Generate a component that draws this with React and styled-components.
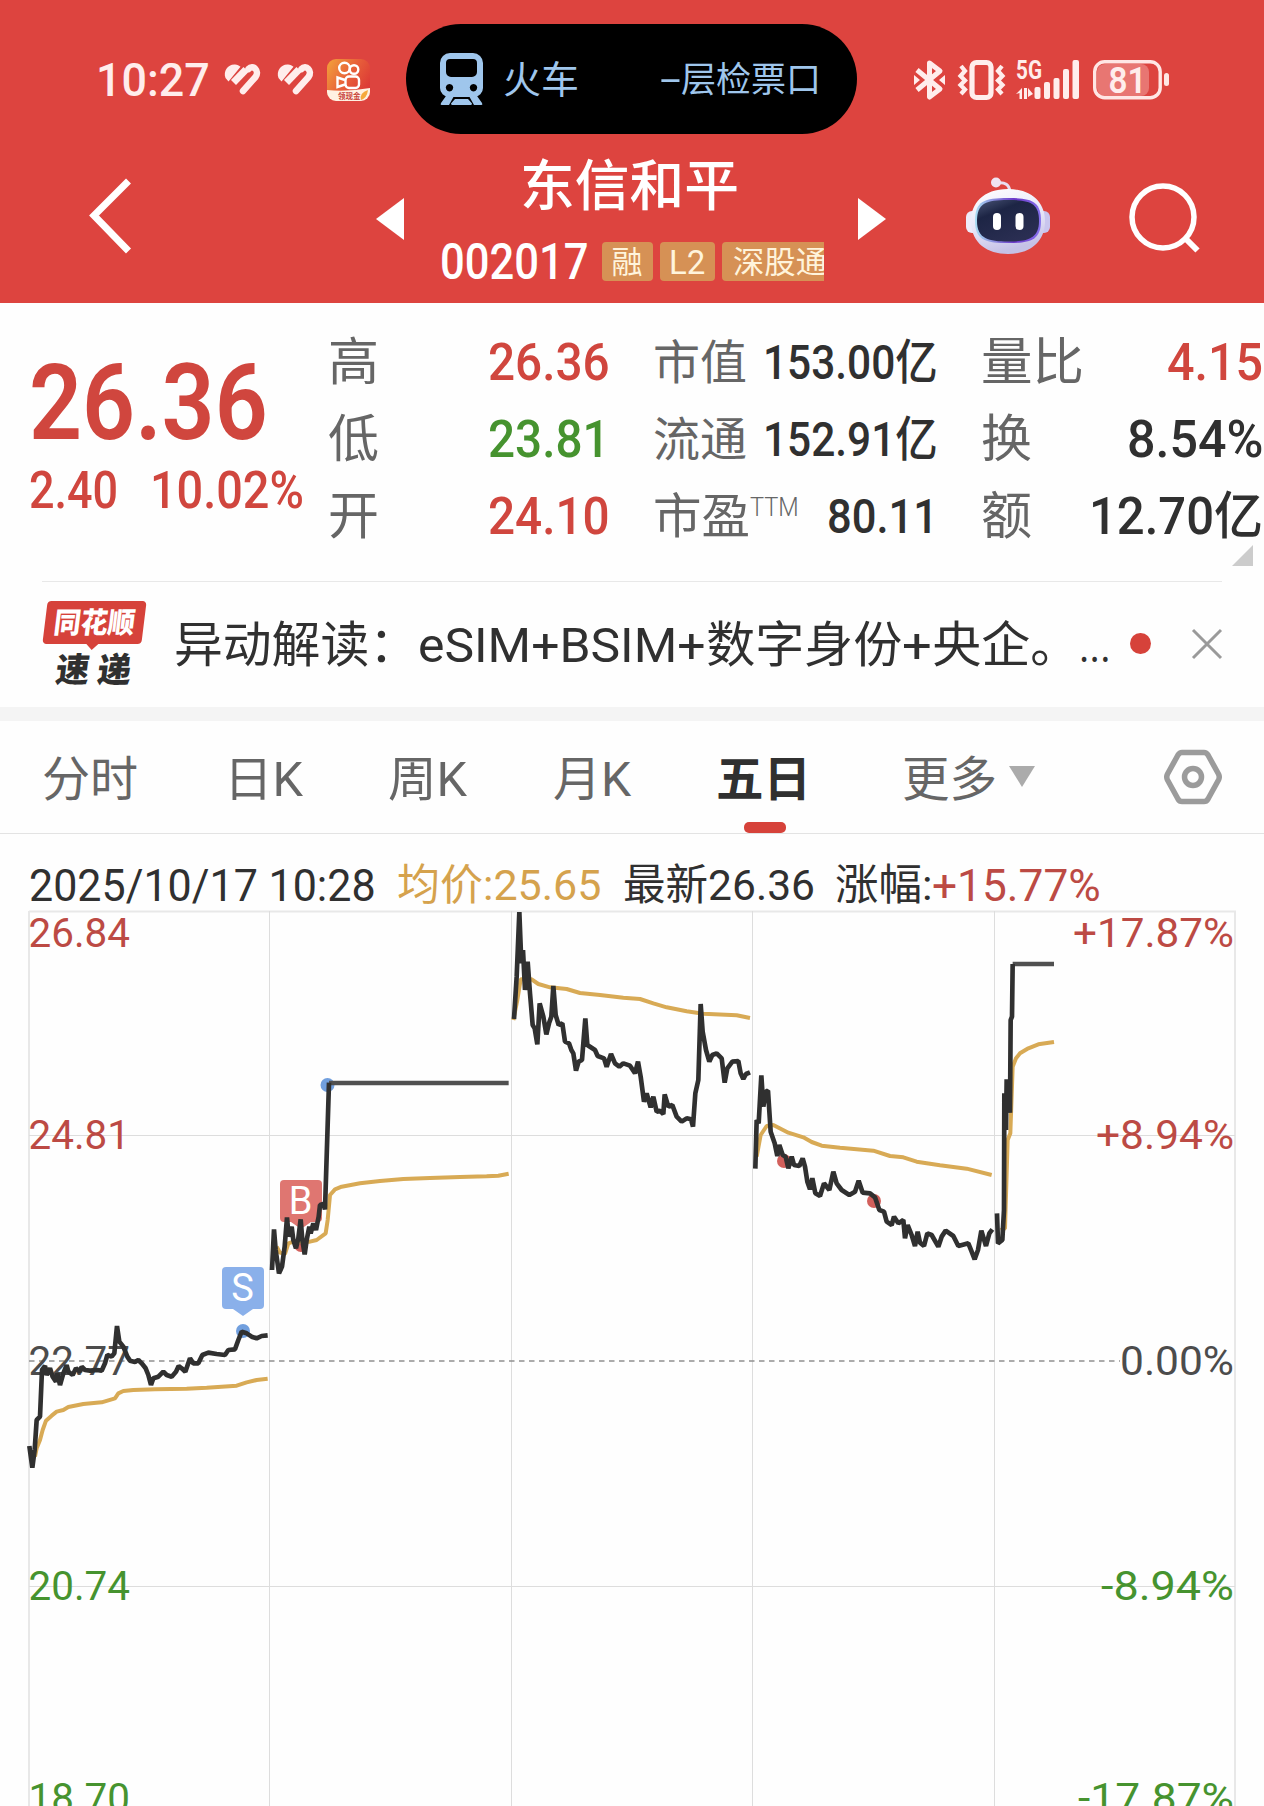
import React, { useLayoutEffect, useRef, useState } from 'react';
import styled, { createGlobalStyle } from 'styled-components';

const RED = '#D0463E';
const GREEN = '#46932F';
const DARK = '#303030';
const GREY = '#666666';

const GlobalStyle = createGlobalStyle`
  * { box-sizing: border-box; }
  body {
    margin: 0;
    background: #fff;
    font-family: Roboto, 'Noto Sans CJK SC', sans-serif;
  }
  svg { display: block; flex: none; overflow: visible; }
`;

const Screen = styled.div`
  width: 1264px;
  height: 1806px;
  overflow: hidden;
  background: #fefefe;
`;

/* text that is squeezed to a given width, the UI face is narrower than Roboto */
const FitBox = styled.span`
  display: block;
  flex: none;
  width: ${p => p.$w}px;
  margin-left: ${p => p.$ml || 0}px;
  margin-right: ${p => p.$mr || 0}px;
  font-size: ${p => p.$size}px;
  line-height: ${p => p.$size}px;
  font-weight: ${p => p.$weight || 400};
  color: ${p => p.$color || 'inherit'};
  white-space: nowrap;
`;
const FitInner = styled.span`
  display: inline-block;
  vertical-align: top;
  transform-origin: 0 50%;
`;

function Fit({ w, size, weight, color, ml, mr, children }) {
  const ref = useRef(null);
  const [scale, setScale] = useState(1);
  useLayoutEffect(() => {
    setScale(w / ref.current.offsetWidth);
  }, [w, children]);
  return (
    <FitBox $w={w} $size={size} $weight={weight} $color={color} $ml={ml} $mr={mr}>
      <FitInner ref={ref} style={{ transform: `translateY(1px) scaleX(${scale})` }}>{children}</FitInner>
    </FitBox>
  );
}

const Header = styled.header`
  height: 303px;
  background: #DD443F;
  color: #fff;
`;

const StatusBar = styled.div`
  display: grid;
  grid-template-columns: 406px 451px 1fr;
  align-items: center;
  height: 150px;
  padding-top: 8px;
  color: #FFEDEC;
`;
const StatusLeft = styled.div`
  display: flex;
  align-items: center;
  padding-left: 96px;
`;
const StatusRight = styled.div`
  display: flex;
  align-items: center;
  padding: 1px 0 0 57px;
`;
const Island = styled.div`
  display: flex;
  align-items: center;
  height: 110px;
  padding-left: 34px;
  border-radius: 55px;
  background: #000;
  color: #9FC6EC;
`;

const NavBar = styled.div`
  display: flex;
  align-items: flex-start;
  height: 153px;
  padding-left: 88px;
`;
const NavItem = styled.div`
  flex: none;
  margin-top: ${p => p.$top}px;
  margin-left: ${p => p.$left}px;
`;
const TitleBlock = styled.div`
  display: flex;
  flex-direction: column;
  align-items: center;
  width: 454px;
  padding-top: 8px;
`;
const CodeRow = styled.div`
  display: flex;
  align-items: center;
  gap: 7px;
  width: 385px;
  height: 60px;
  margin-top: 18px;
  overflow: hidden;
`;
const Tag = styled.span`
  flex: none;
  display: flex;
  align-items: center;
  justify-content: center;
  width: ${p => p.$w}px;
  height: 39px;
  border-radius: 4px;
  background: #D69155;
  color: #FFF4DC;
`;

const Quote = styled.section`
  display: flex;
  height: 278px;
`;
const PriceBlock = styled.div`
  width: 329px;
  padding: 47px 0 0 29px;
`;
const ChangeRow = styled.div`
  display: flex;
  margin-top: 9px;
`;
const StatColumn = styled.div`
  width: ${p => p.$w}px;
  margin-right: ${p => p.$gap}px;
  padding-top: 20px;
`;
const StatRow = styled.div`
  display: flex;
  align-items: center;
  height: 77px;
  color: ${GREY};
`;
const Spacer = styled.div`
  flex: 1;
`;
const Sup = styled.div`
  height: 46px;
`;
const ExpandCorner = styled.div`
  width: 21px;
  height: 21px;
  margin: -9px 0 0 251px;
  background: #ccc;
  clip-path: polygon(100% 0, 100% 100%, 0 100%);
`;

const News = styled.section`
  display: flex;
  align-items: center;
  height: 126px;
  margin: 0 42px;
  padding-bottom: 2px;
  border-top: 1px solid #E8E8E8;
`;
const NewsLogo = styled.div`
  width: 105px;
  height: 85px;
  margin-right: 29px;
`;
const LogoTop = styled.div`
  position: relative;
  display: flex;
  justify-content: center;
  align-items: center;
  width: 99px;
  height: 43px;
  margin-left: 3px;
  border-radius: 4px;
  background: #D6423A;
  color: #fff;
  transform: skewX(-7deg);
  &::after {
    content: '';
    position: absolute;
    left: 43px;
    top: 42px;
    border: 7px solid transparent;
    border-top-color: #D6423A;
    border-bottom: 0;
  }
`;
const LogoBottom = styled.div`
  margin: 8px 0 0 14px;
  transform: skewX(-7deg);
`;
const Headline = styled.div`
  display: flex;
  width: 936px;
  padding-top: 1px;
  color: ${DARK};
`;
const NewsDot = styled.span`
  width: 21px;
  height: 21px;
  margin-left: 20px;
  border-radius: 50%;
  background: #D6423A;
`;

const Band = styled.div`
  height: 14px;
  background: #F4F4F4;
`;

const Tabs = styled.nav`
  display: flex;
  height: 113px;
  border-bottom: 1px solid #E3E3E3;
`;
const Tab = styled.div`
  display: flex;
  flex-direction: column;
  align-items: center;
  margin-left: ${p => p.$left}px;
  padding-top: 34px;
  color: ${p => (p.$active ? DARK : GREY)};
`;
const TabMark = styled.div`
  width: 42px;
  height: 11px;
  margin: 19px 0 0 2px;
  border-radius: 5px;
  background: #D6423A;
`;
const Caret = styled.div`
  width: 26px;
  height: 21px;
  margin: 45px 0 0 12px;
  background: #ABABAB;
  clip-path: polygon(0 0, 100% 0, 50% 100%);
`;
const Settings = styled.div`
  margin: 28px 0 0 129px;
`;

const InfoRow = styled.div`
  display: flex;
  align-items: center;
  height: 71px;
  padding: 30px 0 0 29px;
  color: ${DARK};
`;

const sessions = [
  {
    x: 0, y: 1150,
    price: '88,888 97,953 104,900 110,810 120,800 126,660 135,648 140,675 150,655 158,680 168,695 172,670 180,705 190,670 200,645 205,665 218,675 228,655 240,665 245,650 255,660 270,662 290,660 305,662 315,640 322,615 335,620 343,610 351,528 358,575 370,590 382,620 390,632 405,636 415,630 425,640 437,655 445,675 453,705 460,685 475,680 490,665 500,675 515,680 528,665 536,648 545,655 556,665 570,625 580,640 595,640 607,615 625,608 650,612 675,615 685,600 705,598 715,570 725,545 740,550 755,560 770,565 785,558 803,556',
    avg: '105,920 110,895 120,870 128,840 138,812 155,797 170,785 190,780 205,771 250,762 305,757 345,745 355,730 370,723 400,720 465,718 560,716 620,713 710,707 740,697 770,690 803,686',
  },
  {
    x: 260, y: 1060,
    price: '36,630 42,508 47,570 57,640 66,620 74,560 81,472 86,530 95,500 100,540 108,565 115,535 122,478 127,540 134,583 140,540 148,500 152,520 160,490 168,510 176,470 180,435 190,432 195,448 207,68',
    flat: '207,69 746,69',
    avg: '50,560 60,578 75,582 85,550 100,545 150,545 170,540 197,520 203,480 210,405 225,388 245,380 300,370 360,363 430,357 510,354 600,351 680,349 715,347 746,341',
  },
  {
    x: 500, y: 900,
    price: '42,357 50,230 58,36 64,190 69,150 75,270 83,185 90,280 98,375 104,385 112,433 119,310 130,350 139,403 147,370 154,350 160,258 167,345 176,375 187,370 195,425 207,430 214,450 220,460 228,512 236,485 246,480 256,355 262,435 285,450 293,468 312,475 320,500 333,462 345,490 358,500 370,490 390,497 405,520 414,485 422,530 432,605 440,580 452,622 460,590 470,635 480,632 490,642 494,583 505,620 517,615 530,650 545,665 560,655 573,658 579,680 586,580 595,540 602,312 608,395 618,450 628,485 637,465 650,460 665,475 674,548 682,505 697,485 715,483 722,520 730,537 738,522 750,517',
    avg: '40,360 52,300 62,238 95,238 115,252 150,262 200,267 240,279 300,285 370,293 420,297 460,310 500,322 560,334 610,341 710,346 750,354',
  },
  {
    x: 740, y: 1060,
    price: '46,326 50,180 56,190 64,46 70,140 78,95 84,92 92,215 104,250 112,288 118,255 128,285 137,290 145,325 155,290 162,315 178,318 188,295 195,320 202,365 210,388 217,355 226,400 240,408 252,370 268,390 280,335 290,370 305,390 328,405 345,395 356,362 368,398 390,400 405,412 418,450 432,455 440,485 455,495 462,470 475,490 490,480 495,535 503,495 515,525 525,558 533,515 540,548 552,558 562,520 575,525 595,560 605,530 617,512 640,528 655,558 685,550 695,575 704,598 714,570 724,512 738,558 748,520 757,508',
    avg: '50,290 62,225 80,198 100,195 145,218 190,232 215,246 245,257 300,263 400,272 450,288 490,292 530,305 600,316 680,326 755,345',
  },
  {
    x: 970, y: 900,
    price: '81,940 84,1030 97,1020 102,930 103,580 108,690 110,538 120,638 122,360 126,350 128,192',
    flat: '128,192 252,192',
    avg: '92,990 105,985 113,720 121,700 128,500 138,475 150,460 175,445 205,433 252,426',
  },
];

const axis = [
  { y: 947, price: '26.84', pct: '+17.87%', w: 161, color: '#BC4A44' },
  { y: 1149, price: '24.81', pct: '+8.94%', w: 138, color: '#BC4A44' },
  { y: 1374.500, price: '22.77', pct: '0.00%', w: 114, color: '#4c4c4c' },
  { y: 1600, price: '20.74', pct: '-8.94%', w: 133, color: '#46932F' },
  { y: 1812, price: '18.70', pct: '-17.87%', w: 156, color: '#46932F' },
];

function Heart() {
  return (
    <svg width="37" height="32" viewBox="0 0 37 32" fill="none" stroke="#FFEDEC" strokeLinecap="round" strokeLinejoin="round">
      <path d="M1.5 15C-1 8 4 1 11 1.5c2.500 0 4 1 5.500 2.300L4.500 18.500Z" fill="#FFEDEC" stroke="none" />
      <path d="M9.500 19.500 22 6.500" strokeWidth="7" strokeLinecap="butt" />
      <path d="M19 28 31.500 14C36 8 29 1 24.500 6" strokeWidth="6.500" />
    </svg>
  );
}

function AppIcon() {
  return (
    <svg width="43" height="42" viewBox="0 0 43 42">
      <defs>
        <linearGradient id="app" x1="0" y1="0" x2="1" y2="0.6">
          <stop offset="0" stopColor="#F3A43A" />
          <stop offset="0.55" stopColor="#E8603A" />
          <stop offset="1" stopColor="#DC3A36" />
        </linearGradient>
        <clipPath id="appClip"><rect width="43" height="42" rx="9" /></clipPath>
      </defs>
      <g clipPath="url(#appClip)">
        <rect width="43" height="42" fill="url(#app)" />
        <g fill="none" stroke="#fff" strokeWidth="2.400">
          <circle cx="17.500" cy="9" r="5.300" />
          <circle cx="27" cy="10.500" r="4.300" />
          <rect x="18.500" y="17.500" width="13.500" height="11.500" rx="3.500" />
          <path d="M18 21 10.500 18.500v9.500L18 25.500" />
        </g>
        <path d="M0 31q20 2 43-2v13H0Z" fill="#FFF1E2" />
        <path d="M34 41q-2-7 7-10-1 8-7 10Z" fill="#F5A93D" />
        <text x="11" y="40" fontSize="7.500" fontWeight="700" fill="#C8433A">领现金</text>
      </g>
    </svg>
  );
}

function Train() {
  return (
    <svg width="43" height="53" viewBox="0 0 43 53" fill="#9FC6EC">
      <path fillRule="evenodd" d="M10 0h23a10 10 0 0 1 10 10v25a9 9 0 0 1-9 9H9a9 9 0 0 1-9-9V10A10 10 0 0 1 10 0Zm0 6a4 4 0 0 0-4 4v9a5 5 0 0 0 5 5h21a5 5 0 0 0 5-5v-9a4 4 0 0 0-4-4ZM9.500 31a3.700 3.700 0 1 0 .01 0Zm24 0a3.700 3.700 0 1 0 .01 0Z" />
      <path d="M6 43h8L9 52H1.500Q0 52 1 50Zm31 0h-8l5 9h7.500q1.500 0 .5-2ZM15 46h13l4 4.500q0 1.500-1.500 1.500h-18q-1.500 0-1.500-1.500Z" />
    </svg>
  );
}

function Bluetooth() {
  return (
    <svg width="31" height="40" viewBox="0 0 31 40" fill="none" stroke="#FFEDEC" strokeWidth="5" strokeLinejoin="round">
      <path d="M3 10 26 29 15.500 37V3L26 11 3 30" />
      <path d="m0 15 6 5-6 5Zm31 0-6 5 6 5Z" fill="#FFEDEC" stroke="none" />
    </svg>
  );
}

function Vibrate() {
  return (
    <svg width="47" height="40" viewBox="0 0 47 40" fill="none" stroke="#FFEDEC" strokeWidth="4.200">
      <rect x="14" y="2.500" width="19" height="35" rx="4.500" strokeWidth="5.200" />
      <path d="M3 6 7 11 2.500 16 7 20.500 2.500 25 7 29.500 3 34M44 6l-4 5 4.500 5L40 20.500l4.500 4.500-4.500 4.500 4 4.500" />
    </svg>
  );
}

function Signal() {
  return (
    <svg width="64" height="40" viewBox="0 0 64 40" fill="#FFEDEC">
      <text x="0" y="19" fontSize="25" fontWeight="700" textLength="26" lengthAdjust="spacingAndGlyphs">5G</text>
      <path d="M0 34 6 28v11H3.500v-6Zm8-6h3v11H8Zm4 0 5 6-5 3Z" />
      <rect x="18.500" y="27" width="6" height="12" rx="2" />
      <rect x="28" y="22" width="6" height="17" rx="2" />
      <rect x="37.500" y="18" width="6" height="21" rx="2" />
      <rect x="47" y="9" width="6" height="30" rx="2" />
      <rect x="56.500" y="0" width="6.500" height="39" rx="2" />
    </svg>
  );
}

function Battery() {
  return (
    <svg width="77" height="40" viewBox="0 0 77 40">
      <rect x="4" y="4" width="52" height="32" rx="8" fill="#E87672" />
      <rect x="1.700" y="1.700" width="65.500" height="36" rx="10" fill="none" stroke="#FFE6E4" strokeWidth="3.400" />
      <rect x="71" y="13" width="5" height="13" rx="2.500" fill="#FFE6E4" />
      <text x="15.500" y="32.500" fontSize="37" fontWeight="600" fill="#FFEDEC" textLength="38" lengthAdjust="spacingAndGlyphs">81</text>
    </svg>
  );
}

function Robot() {
  return (
    <svg width="84" height="78" viewBox="0 0 84 78">
      <defs>
        <linearGradient id="shell" x1="0" y1="0" x2="0.300" y2="1">
          <stop offset="0" stopColor="#FFFFFF" />
          <stop offset="0.600" stopColor="#E6E5F8" />
          <stop offset="1" stopColor="#C5C1E6" />
        </linearGradient>
        <linearGradient id="rim" x1="0" y1="0.500" x2="1" y2="0.500">
          <stop offset="0" stopColor="#A9DDF3" />
          <stop offset="0.600" stopColor="#6A35C8" />
          <stop offset="1" stopColor="#8672EC" />
        </linearGradient>
        <linearGradient id="face" x1="0" y1="0" x2="0.600" y2="1">
          <stop offset="0" stopColor="#4A5577" />
          <stop offset="0.350" stopColor="#1D2545" />
          <stop offset="1" stopColor="#2A2E52" />
        </linearGradient>
      </defs>
      <path d="M31 6q12-2 13 9" fill="none" stroke="#E9DDF0" strokeWidth="3" />
      <circle cx="30" cy="5.500" r="5" fill="#F0E4F2" />
      <rect x="0" y="34" width="14" height="22" rx="6" fill="#EDEBFA" />
      <rect x="70" y="34" width="14" height="22" rx="6" fill="#C9C5EE" />
      <path d="M42 12c26 0 38 16 37 34-1 20-16 31-37 31S6 66 5 46C4 28 16 12 42 12Z" fill="url(#shell)" />
      <path d="M42 21c24 0 33 3 33 23S63 66 42 66 9 64 9 44s9-23 33-23Z" fill="url(#rim)" />
      <path d="M42 23c22 0 31 3 31 21S61 64.500 42 64.500 11 62 11 44s9-21 31-21Z" fill="url(#face)" />
      <rect x="27" y="36" width="8" height="17" rx="4" fill="#fff" />
      <rect x="49.500" y="36" width="8" height="17" rx="4" fill="#fff" />
    </svg>
  );
}

function Marker({ x, y, color, letter }) {
  return (
    <g>
      <rect x={x} y={y} width="42" height="42" rx="4" fill={color} />
      <path d={`M${x + 11} ${y + 42}h20l-10 7Z`} fill={color} />
      <text x={x + 20.500} y={y + 34} fontSize="38" fill="#fff" textAnchor="middle">{letter}</text>
    </g>
  );
}

function Chart() {
  return (
    <svg width="1264" height="901" viewBox="0 905 1264 901">
      <path d="M29 911.500H1236M29 911V1806M1235 911V1806" stroke="#E8E8E8" strokeWidth="2" fill="none" />
      <path d="M269.500 911V1806M511.500 911V1806M752.500 911V1806M994.500 911V1806M29 1135.500H1235M29 1586.500H1235" stroke="#DDDDDD" strokeWidth="1" fill="none" />
      <path d="M29 1361H1120" stroke="#909090" strokeWidth="1.600" strokeDasharray="5.500 4.500" />
      {axis.map(a => (
        <g key={a.price} fontSize="41" fill={a.color}>
          <text x="28.500" y={a.y} textLength="101.500" lengthAdjust="spacingAndGlyphs">{a.price}</text>
          <text x={1234 - a.w} y={a.y} textLength={a.w} lengthAdjust="spacingAndGlyphs">{a.pct}</text>
        </g>
      ))}
      <Marker x={222} y={1267} color="#8AB0EA" letter="S" />
      <Marker x={280} y={1180} color="#DF7671" letter="B" />
      <circle cx="243" cy="1331" r="7" fill="#719FDE" />
      <circle cx="327.500" cy="1085" r="7" fill="#719FDE" />
      <circle cx="301" cy="1245" r="7" fill="#D2605C" />
      <circle cx="784" cy="1161" r="7" fill="#D2605C" />
      <circle cx="874" cy="1201" r="7" fill="#D2605C" />
      {sessions.map(s => (
        <g key={s.x} transform={`translate(${s.x} ${s.y}) scale(0.33333)`} fill="none" strokeLinejoin="bevel">
          <polyline points={s.avg} stroke="#D8AA55" strokeWidth="12" />
          {s.flat && <polyline points={s.flat} stroke="#505050" strokeWidth="13" />}
          <polyline points={s.price} stroke={DARK} strokeWidth="14" />
        </g>
      ))}
    </svg>
  );
}

function App() {
  return (
    <Screen>
      <GlobalStyle />
      <Header>
        <StatusBar>
          <StatusLeft>
            <Fit w={114} size={46} weight={500} mr={14}>10:27</Fit>
            <Heart />
            <NavItem $top={0} $left={16}><Heart /></NavItem>
            <NavItem $top={2} $left={13}><AppIcon /></NavItem>
          </StatusLeft>
          <Island>
            <Train />
            <Fit w={76} size={38} ml={20}>火车</Fit>
            <Fit w={21} size={36} ml={81} weight={400}>-</Fit>
            <Fit w={140} size={35}>层检票口</Fit>
          </Island>
          <StatusRight>
            <Bluetooth />
            <NavItem $top={0} $left={13}><Vibrate /></NavItem>
            <NavItem $top={0} $left={11}><Signal /></NavItem>
            <NavItem $top={0} $left={13}><Battery /></NavItem>
          </StatusRight>
        </StatusBar>
        <NavBar>
          <NavItem $top={26} $left={0}>
            <svg width="46" height="80" viewBox="0 0 46 80" fill="none" stroke="#fff" strokeWidth="7">
              <path d="M40.500 5 6 39.500 40.500 75" />
            </svg>
          </NavItem>
          <NavItem $top={48} $left={242}>
            <svg width="28" height="42" viewBox="0 0 28 42" fill="#fff"><path d="M0 21 28 0V42Z" /></svg>
          </NavItem>
          <TitleBlock>
            <Fit w={219} size={55} weight={500} mr={3}>东信和平</Fit>
            <CodeRow>
              <Fit w={149} size={50} weight={500} ml={1} mr={6}>002017</Fit>
              <Tag $w={51}><Fit w={31} size={31}>融</Fit></Tag>
              <Tag $w={55}><Fit w={36} size={33}>L2</Fit></Tag>
              <Tag $w={116}><Fit w={94} size={31}>深股通</Fit></Tag>
            </CodeRow>
          </TitleBlock>
          <NavItem $top={48} $left={0}>
            <svg width="28" height="42" viewBox="0 0 28 42" fill="#fff"><path d="M28 21 0 0V42Z" /></svg>
          </NavItem>
          <NavItem $top={27} $left={80}><Robot /></NavItem>
          <NavItem $top={33} $left={79}>
            <svg width="72" height="72" viewBox="0 0 72 72" fill="none" stroke="#fff" strokeWidth="5.500">
              <circle cx="34" cy="34" r="31" />
              <path d="M55 54 68.500 67.500" strokeWidth="6" />
            </svg>
          </NavItem>
        </NavBar>
      </Header>

      <Quote>
        <PriceBlock>
          <Fit w={239} size={105} weight={600} color={RED}>26.36</Fit>
          <ChangeRow>
            <Fit w={89} size={52} weight={500} color={RED}>2.40</Fit>
            <Fit w={154} size={52} weight={500} color={RED} ml={32}>10.02%</Fit>
          </ChangeRow>
        </PriceBlock>
        <StatColumn $w={281} $gap={43}>
          <StatRow><Fit w={51} size={51} ml={-1}>高</Fit><Spacer /><Fit w={122} size={52} weight={500} color={RED}>26.36</Fit></StatRow>
          <StatRow><Fit w={51} size={51} ml={-1}>低</Fit><Spacer /><Fit w={122} size={52} weight={500} color={GREEN}>23.81</Fit></StatRow>
          <StatRow><Fit w={51} size={51} ml={-1}>开</Fit><Spacer /><Fit w={122} size={52} weight={500} color={RED}>24.10</Fit></StatRow>
        </StatColumn>
        <StatColumn $w={285} $gap={43}>
          <StatRow><Fit w={94} size={47}>市值</Fit><Spacer /><Fit w={175} size={48} weight={500} color={DARK}>153.00亿</Fit></StatRow>
          <StatRow><Fit w={94} size={47}>流通</Fit><Spacer /><Fit w={175} size={48} weight={500} color={DARK}>152.91亿</Fit></StatRow>
          <StatRow>
            <Fit w={97} size={48}>市盈</Fit>
            <Sup><Fit w={49} size={26} weight={300}>TTM</Fit></Sup>
            <Spacer />
            <Fit w={111} size={49} weight={500} color={DARK}>80.11</Fit>
          </StatRow>
        </StatColumn>
        <StatColumn $w={282} $gap={0}>
          <StatRow><Fit w={103} size={51}>量比</Fit><Spacer /><Fit w={96} size={52} weight={500} color={RED}>4.15</Fit></StatRow>
          <StatRow><Fit w={51} size={51}>换</Fit><Spacer /><Fit w={136} size={52} weight={500} color={DARK}>8.54%</Fit></StatRow>
          <StatRow><Fit w={51} size={51}>额</Fit><Spacer /><Fit w={174} size={51} weight={500} color={DARK}>12.70亿</Fit></StatRow>
          <ExpandCorner />
        </StatColumn>
      </Quote>

      <News>
        <NewsLogo>
          <LogoTop><Fit w={81} size={29} weight={900}>同花顺</Fit></LogoTop>
          <LogoBottom><Fit w={75} size={34} weight={900} color={DARK}>速 递</Fit></LogoBottom>
        </NewsLogo>
        <Headline>
          <Fit w={244} size={49}>异动解读：</Fit>
          <Fit w={288} size={49}>eSIM+BSIM+</Fit>
          <Fit w={196} size={49}>数字身份</Fit>
          <Fit w={30} size={49}>+</Fit>
          <Fit w={147} size={49}>央企。</Fit>
          <Fit w={32} size={49}>...</Fit>
        </Headline>
        <NewsDot />
        <NavItem $top={0} $left={41}>
          <svg width="30" height="30" viewBox="0 0 30 30" stroke="#9a9a9a" strokeWidth="3"><path d="M1 1 29 29M29 1 1 29" /></svg>
        </NavItem>
      </News>
      <Band />

      <Tabs>
        <Tab $left={42}><Fit w={96} size={48}>分时</Fit></Tab>
        <Tab $left={86}><Fit w={79} size={48}>日K</Fit></Tab>
        <Tab $left={85}><Fit w={79} size={48}>周K</Fit></Tab>
        <Tab $left={86}><Fit w={78} size={48}>月K</Fit></Tab>
        <Tab $left={85} $active>
          <Fit w={95} size={48} weight={700}>五日</Fit>
          <TabMark />
        </Tab>
        <Tab $left={91}><Fit w={95} size={48}>更多</Fit></Tab>
        <Caret />
        <Settings>
          <svg width="58" height="56" viewBox="0 0 58 56" fill="none" stroke="#9B9B9B" strokeWidth="5.500" strokeLinejoin="round">
            <path d="M18 3.500h22q2.500 0 4 2.500l10.500 19q1.500 3 0 6L44 50q-1.500 2.500-4 2.500H18q-2.500 0-4-2.500L3.500 31q-1.500-3 0-6L14 6q1.500-2.500 4-2.500Z" />
            <circle cx="29" cy="28" r="8.500" />
          </svg>
        </Settings>
      </Tabs>

      <InfoRow>
        <Fit w={347} size={44}>2025/10/17 10:28</Fit>
        <Fit w={204} size={43} ml={21} color="#D5A24D">均价:25.65</Fit>
        <Fit w={192} size={43} ml={22}>最新26.36</Fit>
        <Fit w={97} size={43} ml={20}>涨幅:</Fit>
        <Fit w={169} size={44} color="#BC4A44">+15.77%</Fit>
      </InfoRow>
      <Chart />
    </Screen>
  );
}

export default App;
